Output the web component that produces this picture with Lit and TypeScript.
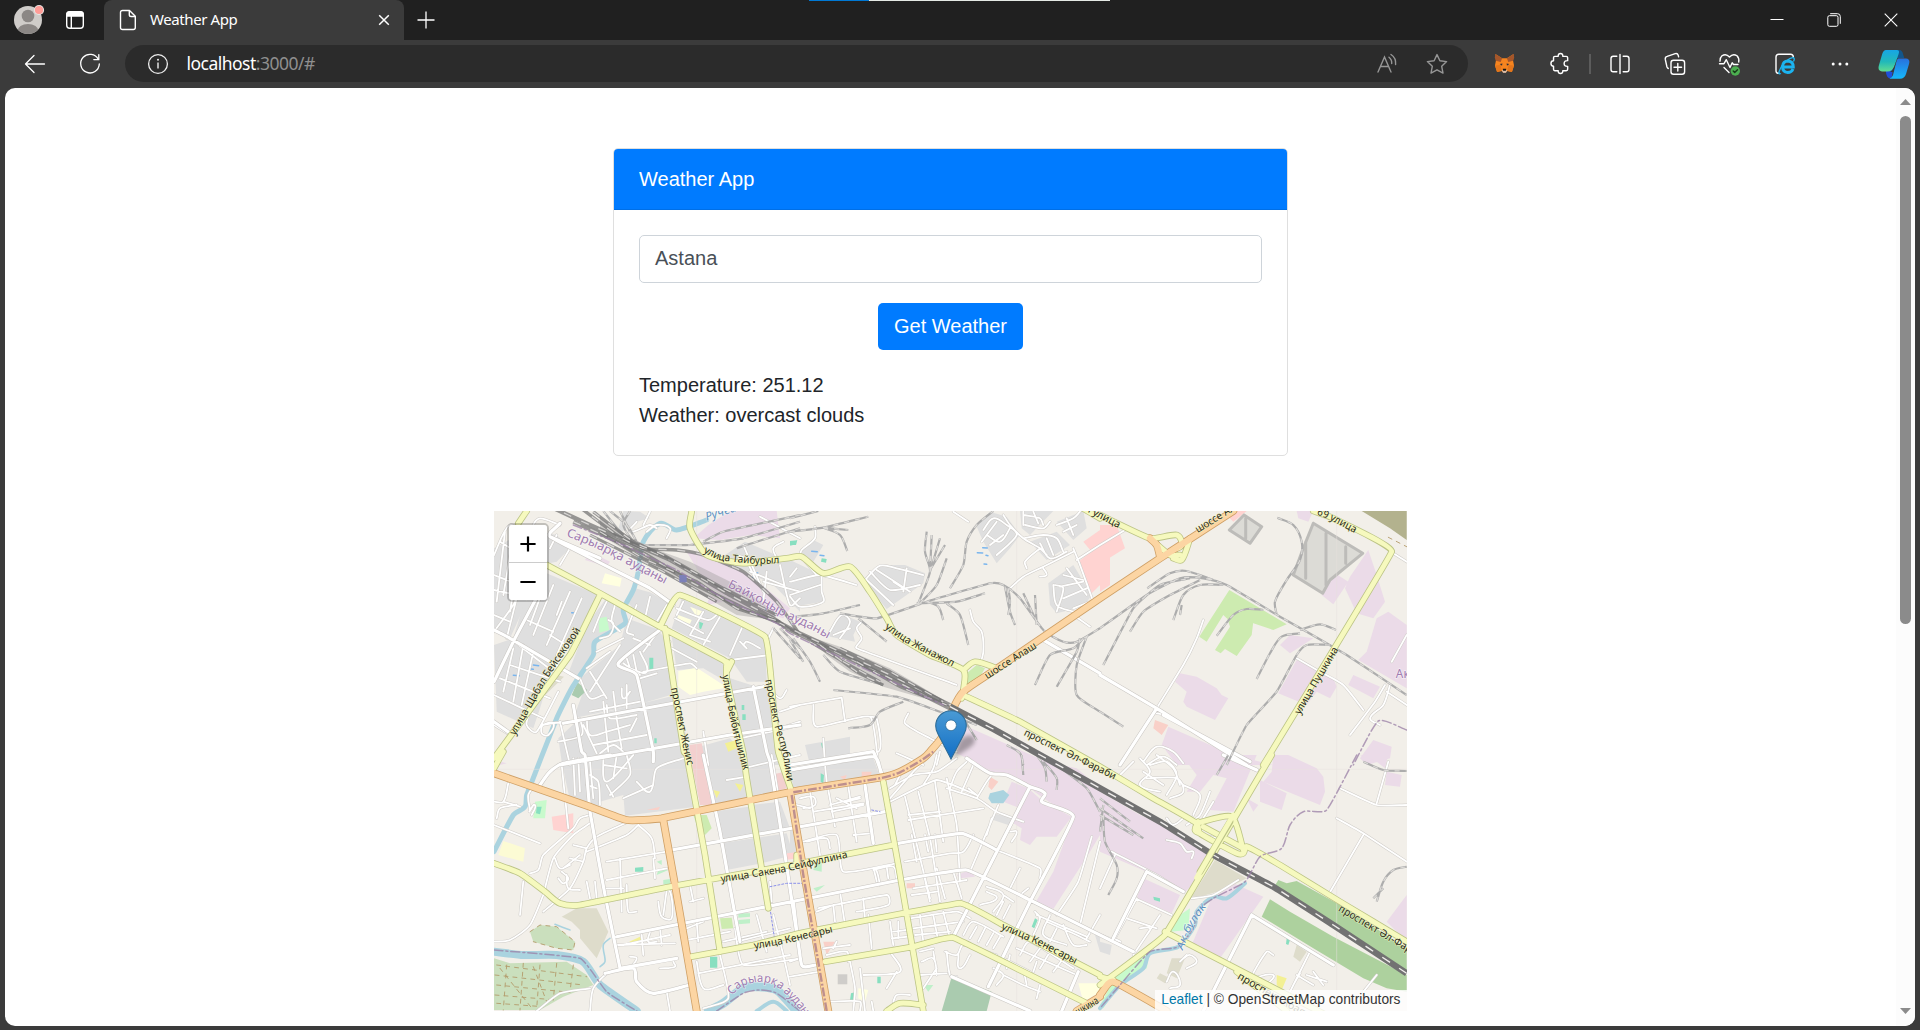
import { LitElement, html, css, svg } from "lit";
import { customElement } from "lit/decorators.js";

/* Map sheets: each letter is the origin of a sheet drawn at three units per pixel. */
const SHEETS: Record<string, [number, number]> = {
  A: [490, 505], B: [790, 505], C: [1100, 505],
  D: [490, 755], E: [790, 755], F: [1100, 755],
};

/* "A 10,20 30,40 B 0,5" -> list of map points. Sheets overlap at the right and
   bottom edges, so a point in the overlap is dropped when the next sheet begins. */
function points(src: string): [number, number][] {
  let o = SHEETS.A;
  let edge = false;
  const out: [number, number][] = [];
  for (const t of src.trim().split(/\s+/)) {
    if (SHEETS[t]) {
      if (edge && out.length > 1) out.pop();
      edge = false;
      o = SHEETS[t];
      continue;
    }
    const [x, y] = t.split(",").map(Number);
    edge = x >= 900 || y >= 750;
    out.push([+(o[0] + x / 3).toFixed(1), +(o[1] + y / 3).toFixed(1)]);
  }
  return out;
}
function line(src: string): string {
  return src.split("|").map((s) => "M" + points(s).map((p) => p.join(",")).join("L")).join("");
}
function curve(src: string): string {
  const unit = (a: number[], b: number[]) => {
    const l = Math.hypot(b[0] - a[0], b[1] - a[1]) || 1;
    return [(b[0] - a[0]) / l, (b[1] - a[1]) / l];
  };
  return src.split("|").map((s) => {
    const p = points(s);
    let d = `M${p[0]}`;
    for (let i = 0; i < p.length - 1; i++) {
      const a = p[i - 1] ?? p[i], b = p[i], c = p[i + 1], e = p[i + 2] ?? c;
      const k = Math.min(Math.hypot(c[0] - b[0], c[1] - b[1]) * 0.3, 6);
      const u = unit(a, c), v = unit(b, e);
      const n = (q: number) => q.toFixed(1);
      d += `C${n(b[0] + u[0] * k)},${n(b[1] + u[1] * k)} ${n(c[0] - v[0] * k)},${n(c[1] - v[1] * k)} ${c}`;
    }
    return d;
  }).join("");
}

const AREAS: [string, string][] = [
  /* residential */
  ["#dfdfdf", "A 12,130 75,95 110,290 60,400 12,370|A 90,70 200,90 240,130 200,170 150,180"],
  ["#dfdfdf", "A 100,300 170,205 325,270 270,370 190,480 150,610 130,670 20,620 12,420 70,400"],
  ["#dfdfdf", "A 345,285 400,305 405,350 325,405 310,450 260,520 235,505 290,360"],
  ["#dfdfdf", "A 435,250 480,262 548,300 515,355 430,310 410,290"],
  ["#dfdfdf", "A 410,340 500,372 525,400 560,565 440,600 250,640 280,560 270,520 390,420"],
  ["#dfdfdf", "A 575,280 825,400 830,530 770,530 720,460 545,370"],
  ["#dfdfdf", "A 545,395 700,470 700,525 640,490 560,495"],
  ["#dfdfdf", "A 720,520 800,545 835,540 870,700 880,780 750,780"],
  ["#dfdfdf", "A 205,700 270,640 560,570 600,740 D 618,155 405,182 400,120 330,140 325,155 238,128 215,20"],
  ["#dfdfdf", "A 610,730 720,700 760,745 D 770,60 778,130 665,150 640,0 600,0"],
  ["#dfdfdf", "D 765,30 840,20 855,110 778,125|D 682,168 775,155 790,235 690,258|D 785,150 870,140 900,220 795,235|D 690,265 890,235 910,300 815,325 710,345"],
  ["#dfdfdf", "A 690,160 765,110 930,180 930,320 850,240"],
  ["#dfdfdf", "A 380,90 440,50 480,40 450,20 400,18"],
  ["#dfdfdf", "B 30,140 70,105 100,120 70,170|B 0,165 95,210 100,290 10,305 0,290"],
  ["#dfdfdf", "B 220,225 270,180 345,180 405,205 400,235 290,312|B 115,380 150,325 210,350 190,390 195,410 120,395"],
  ["#dfdfdf", "B 560,65 600,20 650,35 690,90 660,130 620,175 580,110|B 690,18 790,18 720,90 695,70|B 720,110 800,80 840,120 770,165|B 800,50 880,18 890,70 850,105"],
  ["#dfdfdf", "B 775,235 850,180 905,270 880,305 800,325 780,300"],
  ["#dfdfdf", "E 0,45 250,10 270,65 10,100|B 45,720 180,695 180,765 60,780|E 0,220 15,220 20,300 0,305|E 610,175 670,190 655,210 610,195"],
  ["#dfdfdf", "F 0,560 35,570 30,600 0,590|E 915,540 930,540 930,590"],
  /* industrial */
  ["#ebdbe8", "A 655,60 720,18 860,18 870,100 780,90 690,105 610,100"],
  ["#ebdbe8", "A 590,140 640,150 780,210 900,310 880,340 740,300 650,240|A 300,140 360,170 350,185 285,165|A 660,270 700,290 650,300"],
  ["#ebdbe8", "B 520,660 690,735 E 770,20 860,40 930,100 930,240 900,290 790,462 738,440 790,350 850,185 760,130 720,100 640,55 600,55 530,10 B 500,745"],
  ["#ebdbe8", "E 665,80 715,100 760,140 845,185 800,245 740,245 720,270 690,255 695,220 670,205 690,160 640,140|E 500,360 540,345 555,365 510,370"],
  ["#ebdbe8", "F 0,110 120,180 260,240 330,305 300,370 250,415 140,350 0,290|F 130,370 240,420 215,475 110,430"],
  ["#ebdbe8", "F 400,385 490,425 360,610 275,570 330,440|F 245,0 470,0 400,170 330,165 380,70 340,60 300,110 260,110 290,60"],
  ["#ebdbe8", "C 185,720 205,665 400,750 520,780 230,780|C 225,530 240,505 290,515 350,550 365,570 385,580 345,645 260,605 250,590 260,560"],
  ["#ebdbe8", "C 590,465 700,520 710,545 690,580 650,560 620,600 535,565|C 540,420 570,390 640,400 570,445|C 760,510 840,545 820,580 745,540|C 800,440 830,340 865,320 920,360 920,550 775,465"],
  ["#ebdbe8", "C 665,270 705,205 745,230 700,298|C 750,215 805,135 830,210 855,290 820,340 770,325 735,250|C 590,18 640,18 625,50 595,40|C 820,705 875,725 870,760 800,780 780,760"],
  ["#ebdbe8", "F 520,0 565,0 650,40 670,65 675,110 660,150 490,80 515,50|F 480,75 560,115 545,165 480,140|F 440,130 475,150 460,170|F 780,0 865,0 855,40 830,20|F 860,50 905,60 900,95 855,90|F 920,420 920,560 860,500"],
  ["#ebdbe8", "A 12,765 50,775 30,780 12,780"],
  /* retail */
  ["#ffd3d1", "B 865,170 930,120 930,240 905,265|B 880,110 930,75 930,120 905,140|C 0,60 50,60 75,130 10,170 0,140|C 0,190 25,235 0,250|C 380,30 400,18 440,18 400,50|C 0,130 30,120 30,240 0,260"],
  ["#ffd3d1", "D 185,185 250,175 250,235 190,225|D 890,295 930,290 930,310 885,315"],
  ["#f3d0cf", "A 597,720 635,715 640,740 D 665,150 630,150 600,0|D 840,60 885,50 890,100 855,110"],
  ["#f9d0c8", "E 600,65 625,80 605,105 595,95|E 350,385 375,385 375,400 350,400|E 100,560 135,560 110,600|E 215,50 245,50 240,70 215,70|E 150,65 170,60 165,75|C 165,645 205,660 185,690 160,670|D 470,165 510,155 505,165"],
  /* education */
  ["#ffffe0", "A 565,498 620,488 700,540 700,550 640,560 600,570 565,545|A 345,205 395,220 390,245 335,235|A 565,330 605,345 600,357 560,343|A 600,305 640,320 620,335|E 865,685 930,685 930,710 880,740|E 205,700 235,705 225,740 205,730"],
  ["#fcfbd4", "D 40,258 105,280 100,320 25,300"],
  ["#f3f094", "D 670,105 690,110 680,130|D 735,85 760,90 750,110|D 418,560 450,545 455,560 430,570|F 530,660 560,670 545,705 530,690|A 705,715 740,705 740,730 715,740"],
  /* parks and woods */
  ["#cdebb0", "C 388,255 480,310 560,358 520,375 460,355 450,340 380,340 370,330 320,410 298,395"],
  ["#cdebb0", "C 390,365 460,350 455,390 410,453 375,432 362,445 345,435|C 380,335 470,330 470,350 390,365|B 530,505 560,480 585,490 570,515 530,540|D 610,180 650,180 665,220 645,240 620,210|D 690,490 725,488 730,520 695,522"],
  ["#add19e", "F 535,375 560,385 590,378 720,450 920,580 920,650 520,400|F 510,433 570,470 700,545 920,660 920,710 860,700 790,670 640,580 485,485"],
  ["#aacbaf", "E 485,665 605,710 590,768 455,768|A 262,532 292,555 265,580 245,570"],
  ["#cadfbd", "D 120,530 150,510 200,515 255,560 250,585 200,580 130,560|D 12,610 60,625 230,620 290,660 310,690 220,725 150,765 12,765"],
  ["#c8facc", "A 325,340 350,335 358,375 328,383|F 270,460 265,525 210,530 240,480|F 90,610 150,590 140,640 60,680 10,760 0,750 50,660|D 135,140 170,135 165,190 130,190"],
  ["#bff0c9", "D 500,320 515,315 515,330|D 505,345 535,345 500,360|D 520,375 540,372 540,388 520,388|D 745,475 780,475 780,485 745,488|D 745,495 780,492 780,505 745,508|E 70,400 105,390 80,410|E 75,325 95,325 95,350 70,345|E 400,690 430,690 415,710"],
  ["#dedccb", "A 200,510 222,515 145,590 165,560|D 215,485 260,460 320,460 355,530 320,610 270,550 270,525 245,500|F 345,315 440,370 370,405 300,425 275,425|F 215,610 255,610 230,670 200,655|F 590,570 620,590 600,620 580,605|F 180,655 210,670 195,685 170,670"],
  ["#b3b28e", "C 785,18 920,18 920,105 870,70"],
  ["#dcdbd6", "C 640,55 788,145 690,225 668,265 580,210 610,130|C 432,30 485,65 450,115 388,75"],
  ["#cfcdca", "E 143,658 172,658 172,688 143,688"],
  ["#aad3df", "E 600,115 640,105 658,120 640,145 605,145 595,130"],
  ["#88dfc0", "A 478,458 490,458 490,495 478,495|D 435,338 460,336 460,350 435,350|D 660,605 682,605 682,638 660,638|D 140,155 155,155 150,178 138,175|E 262,665 272,665 272,685 262,685|E 183,715 195,712 190,735 180,735|B 0,108 22,106 18,120 0,120|B 95,160 110,162 108,173 93,170|A 904,110 920,106 918,118 900,122|B 93,715 103,713 104,728 96,728|E 735,490 743,495 733,520 725,515|A 628,350 640,355 633,373 628,370|A 757,628 767,628 767,645 757,645|A 755,600 763,600 763,615 755,615|E 92,55 102,60 100,85 92,80|A 493,700 500,700 500,715 493,715|F 160,425 180,430 180,440 162,435|F 560,550 570,555 565,570 558,567"],
];

/* river, rail yards and streets; all drawn by class */
const WATER = [
  ["A 650,45 560,75 510,55 460,110 445,200 430,255 400,315 405,355 315,410 310,450 245,550 200,640 150,780 D 110,120 105,155 70,180 12,290", 5],
  ["D 12,590 100,600 200,600 280,620 330,690 440,768", 8],
  ["D 655,768 700,745 760,700 800,695 860,705 930,768 E 20,768", 9],
  ["D 800,768 850,740 890,768", 4],
  ["F 435,385 380,430 340,425 290,470 285,510 235,575 150,595 130,640 60,690 0,760", 4],
  ["D 330,635 345,620 340,570 360,550|D 195,508 240,525", 1.6],
] as [string, number][];

const MINOR = [
  /* A */
  "A 12,150 60,60 120,120 90,240 50,400|A 12,210 75,235|A 12,255 80,270|A 30,110 110,160|A 12,330 60,350|A 45,80 20,290|A 70,95 40,270|A 95,110 60,320|A 12,380 75,290 130,60 150,40 210,60",
  "A 155,265 120,360|A 190,240 130,390|A 240,260 170,420|A 275,280 200,450|A 110,345 190,380|A 180,390 245,430|A 215,290 200,330|A 70,430 40,560|A 100,420 70,590|A 130,440 95,600|A 60,480 210,530|A 30,520 180,580|A 12,570 160,640|A 60,400 190,500|A 120,620 110,660 140,680 205,560",
  "A 200,90 180,130|A 240,130 210,180|A 350,290 330,330 310,380|A 375,300 365,350 390,380|A 355,345 370,355 360,390 330,400|A 360,440 290,490|A 400,400 320,440|A 440,300 410,380 430,390|A 480,275 465,340|A 530,300 500,350",
  "A 270,520 300,580 340,570|A 300,500 350,580|A 390,420 300,560|A 480,420 430,400|A 500,385 460,440|A 400,475 450,510|A 410,460 420,490|A 430,450 440,500|A 450,440 470,500 420,490|A 460,500 600,475 620,490",
  "A 560,310 655,345 690,320|A 580,290 560,330|A 640,320 600,390|A 690,335 640,420|A 755,370 720,450|A 555,340 640,385|A 600,390 660,410|A 720,465 840,450|A 760,420 770,410 810,430|A 770,430 750,410|A 540,410 530,440|A 545,430 620,470|A 850,370 835,400",
  "A 205,710 275,690 270,640|A 210,650 240,780|A 290,640 300,690 350,680 420,660|A 340,590 355,740|A 370,560 380,640 395,730|A 395,550 400,580 420,560|A 410,540 410,610|A 300,620 450,590|A 350,600 360,640 440,630|A 280,660 320,745|A 420,680 440,640|A 310,720 470,690|A 330,745 370,720 400,740|A 155,660 190,655 175,690 155,685 160,660 240,650|A 450,520 500,505|A 720,560 830,545 870,580 890,555|A 750,700 890,670 930,660|A 640,680 655,780|A 870,620 930,600|A 840,680 930,650|A 12,660 60,690",
  "A 720,185 760,160 800,230|A 760,120 820,260|A 780,200 880,240|A 740,150 800,170|A 830,200 820,290|A 870,180 900,300 930,280|A 820,230 930,260|A 440,50 420,80 480,60 500,70|A 470,80 500,60 540,70 530,100|A 810,35 930,100|A 860,160 850,130 880,110|A 480,20 460,60",
  /* B */
  "B 75,65 75,100 35,135 30,150|B 0,230 90,210 200,240|B 95,200 95,260 100,290 30,305 0,275|B 0,270 90,240|B 20,190 0,215|B 45,170 80,210|B 225,225 270,182 320,190 400,210|B 240,200 300,255 390,240|B 260,195 360,260|B 230,225 310,300|B 310,230 340,250|B 350,190 340,260|B 120,380 155,330 180,350 150,400|B 215,350 200,370 215,400 200,430 500,540|B 540,315 550,350 575,380 580,440 570,480|B 490,20 535,50|B 130,390 180,370",
  "B 580,75 610,40 650,60 680,90 620,150|B 590,90 630,110 660,70|B 575,110 620,50|B 600,120 640,90|B 640,30 660,60 700,100 750,130 770,150|B 700,30 750,40 760,60|B 705,60 760,70 780,50|B 700,100 760,90 800,100 820,140|B 700,20 700,60|B 730,20 745,55|B 770,100 790,150|B 750,115 780,160 830,140|B 800,60 850,40 870,20|B 820,80 860,60|B 830,40 850,90|B 850,130 870,180 910,290|B 660,250 700,215 760,185 850,140|B 710,190 705,170 750,130|B 760,190 770,210 750,215",
  "B 795,240 820,250 800,320|B 820,210 880,225|B 830,190 890,270|B 810,245 880,230|B 820,280 890,250|B 850,310 900,290|B 790,240 800,300 850,320|B 850,330 900,365|B 930,120 860,165",
  "B 0,605 155,578|B 70,600 80,665 240,635 265,780|B 155,578 165,650|B 240,635 260,640 265,740 0,780|B 100,700 105,780|B 355,625 345,655 420,700 500,740|B 320,745 400,780|B 450,740 440,780",
  /* C */
  "C 0,120 75,75|C 310,345 290,400 250,480 170,610|C 590,460 660,500 730,540 790,615|C 855,540 825,590 750,690|C 870,540 850,600 810,640 840,660|C 860,560 920,600|C 880,145 920,170|C 920,390 875,470|C 170,625 200,630|C 130,770 170,725 220,740 250,775|C 140,780 190,755 230,780",
  /* D */
  "D 12,210 150,265|D 55,85 40,140 12,140|D 40,140 90,155|D 20,190 30,160 80,150|D 118,170 135,150 125,180|D 215,30 235,220|D 250,10 255,120|D 265,10 270,110|D 300,60 325,80 330,150|D 290,90 320,100|D 300,20 310,130|D 340,0 350,80 430,0|D 360,120 420,60 410,0|D 370,70 380,0|D 440,80 480,110 500,40 580,10|D 340,30 410,40|D 350,90 370,125|D 400,130 490,90|D 120,165 115,120 135,90",
  "D 120,355 145,345 160,300 250,220 270,190 300,180|D 160,420 190,310 250,240 300,205|D 405,205 320,245 290,280 280,320 240,400 160,470|D 445,210 410,240 290,290|D 445,210 485,250 495,310|D 290,280 250,270|D 280,320 240,310|D 270,300 220,340|D 195,310 210,340 240,330|D 215,350 235,370 220,385 205,370|D 230,360 235,400 270,405|D 290,380 300,430|D 315,380 320,430|D 100,380 90,480|D 390,310 395,470|D 350,375 480,350 530,340|D 350,320 530,290|D 350,400 400,400|D 410,390 415,470 440,470|D 490,310 495,370|D 505,400 540,410 545,490 515,485 505,440|D 530,405 520,480|D 600,390 610,440",
  "D 12,560 60,555 120,510 160,420|D 380,570 555,565|D 400,570 540,540|D 455,540 460,600|D 510,520 515,570|D 480,530 475,560 500,560|D 590,555 720,530|D 620,500 625,560|D 590,520 640,500|D 600,440 640,430|D 420,640 440,610 420,605|D 510,640 555,635 550,620|D 620,620 640,700 700,690|D 530,710 540,768|D 625,655 900,600|D 735,520 760,630 930,610|D 740,560 900,520|D 800,480 830,590|D 850,480 880,600 900,690|D 690,600 715,730 640,760|D 820,340 840,460|D 300,768 310,700 360,650 430,640|D 740,360 930,320|D 840,380 845,440|D 700,560 830,530|D 300,700 210,715 140,768",
  "D 640,0 670,140|D 760,40 930,0|D 845,0 865,120|D 710,75 770,65|D 880,30 900,110",
  /* E */
  "E 105,30 110,80|E 30,130 70,125 75,150 40,160|E 20,150 60,160|E 60,110 90,300|E 115,105 135,215|E 175,95 200,260|E 120,150 210,125|E 125,170 220,150|E 140,130 200,160|E 210,130 170,140|E 70,170 220,145|E 40,260 140,240 160,350 320,325|E 50,260 110,250 120,280|E 190,240 245,235|E 85,460 290,420 295,450 200,470|E 220,430 225,490|E 130,450 135,500|E 150,410 165,510|E 80,470 130,450|E 235,480 245,580|E 300,500 310,570|E 250,345 310,335 320,370|E 260,380 255,340 270,390|E 290,335 295,370|E 310,530 350,525|E 305,550 355,545|E 325,500 325,550",
  "E 300,140 440,75 560,120|E 345,125 420,430|E 385,110 420,250 450,440|E 435,80 460,260|E 470,70 500,210 510,380|E 355,195 580,160|E 355,180 450,170|E 365,240 380,320|E 405,240 415,290|E 435,240 440,290|E 345,320 480,295 520,290 550,240|E 400,350 420,440|E 440,340 465,430|E 490,350 515,430|E 370,400 530,375|E 365,420 440,410|E 500,380 510,410|E 360,490 500,470 540,490|E 370,520 520,500|E 375,540 480,530|E 390,480 400,560|E 430,480 445,560|E 460,470 480,550|E 390,590 430,580|E 395,620 430,610 440,660|E 430,590 435,620",
  "E 470,100 560,130 620,170 700,200|E 480,100 500,50 530,20|E 560,130 590,80 605,60|E 515,110 550,30|E 560,120 535,100|E 625,150 540,350|E 605,190 590,240|E 550,250 620,285 750,340 750,370|E 660,230 680,230 665,260|E 590,410 620,430 570,450|E 590,395 640,420 610,470|E 640,420 670,440|E 640,440 620,480|E 660,450 640,490|E 690,340 660,400|E 715,400 690,420|E 735,470 750,490 730,540",
  "E 465,590 500,600 520,570 620,600|E 505,600 510,640 540,600|E 520,540 550,500 640,545|E 540,550 560,515|E 565,560 585,520|E 590,570 610,535|E 610,580 630,545|E 470,590 480,660 500,665|E 610,640 640,660 620,690|E 620,650 600,690|E 640,610 720,650|E 660,600 650,640|E 640,660 700,690 750,710|E 700,640 710,690|E 740,620 730,650|E 680,580 860,660|E 690,600 720,560 850,640|E 720,620 750,580|E 750,640 780,590|E 790,650 820,610|E 750,690 740,730|E 770,500 860,540 900,560|E 780,480 760,540 830,570|E 800,520 780,560|E 820,510 850,570 890,570|E 905,245 865,380 800,480|E 930,260 870,510|E 740,480 890,545|E 890,550 930,480",
  "E 180,620 195,700 190,768|E 210,640 225,768|E 100,580 180,570|E 110,600 170,590 175,620|E 130,580 140,560|E 0,665 90,650|E 300,590 330,650 220,660|E 310,740 320,720 360,720|E 120,740 210,740 210,768|E 245,740 250,768|E 390,660 470,655|E 400,700 440,640|E 320,650 290,700|E 0,620 30,610|E 300,130 370,50 420,0|E 315,90 330,60|E 400,90 430,40 440,0|E 300,100 370,60 440,50 500,10",
  /* F */
  "F 100,20 60,60|F 120,10 150,50 120,90 180,110|F 150,30 200,20 230,60 200,120|F 170,0 220,40 240,90|F 140,70 230,70 250,110 210,130|F 130,50 190,90|F 250,90 300,120 280,180|F 330,110 300,180 260,210|F 200,190 220,210 260,180|F 340,140 310,190|F 200,255 240,265 260,290 280,290 275,310|F 350,250 310,240|F 275,430 340,420 415,375|F 0,540 60,560 40,550|F 45,300 0,400|F 100,600 180,480|F 35,290 170,360 250,410|F 45,550 110,430|F 105,430 215,480|F 120,520 150,520 140,540|F 250,610 270,600 290,620 260,640|F 240,620 260,600|F 200,680 220,650 240,690 210,700|F 520,600 500,590 450,680 490,690|F 460,670 520,660 500,690|F 590,660 640,690|F 620,660 680,680|F 640,650 670,690|F 630,590 560,730|F 790,240 685,420|F 710,190 790,235 920,320|F 830,660 790,710|F 720,100 830,150 920,150|F 865,20 830,145|F 170,520 80,490|F 600,655 580,690",
];

const STREETS = [
  "A 210,55 180,95 480,250 550,300",
  "A 180,95 330,160|A 12,375 60,400 265,520|A 155,250 75,400 12,530",
  "A 510,375 385,475 440,510 490,740 D 490,20",
  "A 250,600 275,740 D 285,0 300,170 345,420 390,640",
  "A 220,655 820,545|A 12,650 60,685|A 210,780 720,690 930,660|D 150,90 180,50 220,25 360,0|A 790,545 830,740 D 840,20 885,300 915,500 930,600",
  "D 545,285 930,220 E 30,215 285,170|D 640,0 690,230 735,480 750,560|D 380,545 730,475 930,435 E 30,435 330,375 530,345 720,435 930,535 F 100,590",
  "D 390,640 560,610|D 345,655 430,640 440,680 490,715 600,690",
  "E 0,45 250,5 275,60|B 250,740 0,780|B 250,740 E 255,0 275,55|E 225,90 250,265|E 325,265 515,235 620,285|E 530,10 600,55 650,60 720,95 765,115 755,140 850,185 720,440 595,695",
  "E 720,95 490,545|E 10,440 35,630 80,630|E 485,665 720,768|E 865,650 815,768|F 455,480 310,768|F 455,480 700,630|F 140,350 40,550|F 140,350 250,410",
  "C 0,510 170,610 440,780|C 170,610 60,780|C 190,630 450,770|B 760,405 930,505|F 370,0 470,45",
];

const YELLOW = [
  "A 110,18 85,55|A 170,180 330,265 420,315 510,365 700,465 715,480|A 330,270 240,450 12,760",
  "A 510,365 570,270 825,395 850,600 865,740 D 905,110|A 525,370 545,500 582,740 D 590,0 645,300 690,590|A 710,470 710,520 750,700 760,745 D 770,70 835,460|A 725,470 710,500",
  "A 605,18 600,70 650,150 760,175 B 0,158 35,155 100,205 180,185 240,260 290,340 320,390 420,450 520,495 520,560|B 520,495 555,470 620,490|B 515,580 530,550 600,505",
  "B 530,575 690,650 930,770 F 0,35 160,130 290,205 300,235 410,295 430,295 440,275 540,330 720,440 920,560|F 290,205 395,185 430,285|F 300,235 285,225 295,200|F 310,215 430,280",
  "C 0,30 150,100 230,90 245,120 220,135|C 220,160 245,165 270,100|C 150,100 210,150 240,150|C 640,18 700,40 875,140 490,780|F 515,0 195,540 0,690",
  "F 195,530 920,905|E 20,325 20,300",
  "D 12,325 90,355 165,410 210,445 270,450 540,395 930,325 E 30,325 310,270|E 280,80 325,330 400,768|D 595,607 790,570 930,545 E 30,535 130,515 510,445 640,510 930,660|E 105,620 370,575 490,548 900,750|E 290,768 330,745 400,750",
  "F 0,665 40,675|F 410,650 560,768|A 12,790 40,740|B 870,5 930,40",
];

const ORANGE = [
  "D 12,55 300,155 410,195 515,190 930,115 E 30,105 270,68 330,50 400,10 B 420,740 460,690 490,610 520,560 600,505 930,285 C 0,280 180,160 400,18",
  "D 520,195 555,390 620,768",
  "E 0,110 50,400 115,768",
  "C 180,155 170,120 150,100",
  "F 0,720 40,680 200,768|E 860,768 930,730 F 0,725",
];

const TUNNEL = ["D 905,120 925,300 E 40,360 110,768|E 10,112 270,70 330,52 400,12 B 430,740"];

const RAIL_MINOR = [
  "A 340,18 400,90 460,120|A 360,18 410,60 440,110|A 390,18 420,80|A 930,50 760,100 600,120 460,120|A 930,30 700,80 640,110|A 930,70 800,110 740,130|A 420,18 400,60 430,110",
  "B 0,80 100,68 235,35|B 0,40 85,18|B 100,68 150,90 172,138|B 100,68 175,75|B 20,335 100,325 210,300|B 150,325 260,340 410,290 600,235 640,240 690,280 760,375 820,410 860,410 930,370|B 205,340 290,410|B 385,295 420,200 405,140 410,80|B 420,200 425,90|B 420,200 450,100|B 420,195 465,120|B 390,295 440,240 470,160|B 480,250 520,180 530,110 560,60 610,18|B 380,295 500,290 585,265|B 410,290 445,305 460,345|B 470,295 510,330 535,420|B 645,245 660,320 675,360|B 655,250 660,290 655,330|B 740,360 735,270|B 740,350 700,265|B 870,400 860,440 800,545|B 880,400 850,430 780,450 735,540|B 890,395 860,480 860,570 930,620",
  "B 130,555 320,575 450,620 560,660|B 175,670 240,660 270,620 340,590|B 0,405 40,470|B 10,400 60,470 90,530|B 100,450 150,500 280,540|B 520,640 560,705|B 650,720 690,745 700,780",
  "A 850,370 930,460|A 870,370 930,430",
  "C 0,370 140,270 240,220 310,220 380,240 540,335 620,380 740,450 920,570|C 142,250 210,205 260,198 340,225|C 10,480 100,310 180,240 270,220|C 90,380 130,320 210,270 300,225|C 220,345 250,270 300,240 370,240|C 240,330 245,300|C 532,38 580,60 605,110 600,165 560,225 525,290 530,330|C 350,392 400,330 440,312 490,315|C 600,375 660,358 708,375|C 470,522 510,445 545,395 600,385|C 690,420 620,420 590,450 530,560 440,660 380,780|C 0,620 70,665",
  "F 350,60 385,0|F 10,180 15,260 50,330 50,370 25,420|F 0,160 130,250|F 0,180 100,240|F 830,440 850,380 880,345 920,335|F 820,430 850,400|F 790,20 850,45 920,48|F 0,130 90,200|F 10,150 0,230",
  "E 695,0 700,60|E 770,80 765,40 740,0|E 800,105 800,70 760,20|E 930,170 890,100 800,30",
];
const RAIL = [
  ["A 170,0 300,60 460,130 540,165 720,270 850,340 B 0,375 240,490 480,610", 4.2],
  ["A 260,0 380,90 460,130 560,135 640,150 760,200 860,290 930,390", 3.4],
  ["A 250,50 460,145 600,230 760,310 860,350 B 30,385 150,440 300,510 480,600", 4],
  ["A 330,80 460,160 620,230 740,310 870,350", 3],
  ["A 310,20 430,110 520,150 700,250 860,330", 3.2],
  ["A 300,90 520,200 680,290|B 90,420 200,500 280,540|B 60,410 160,470 270,530|B 150,430 300,500 460,590|B 200,470 330,545 470,600", 3],
  ["B 480,605 610,672 E 745,-3 930,92 F 180,200 340,300 520,395 700,510 920,655", 6.4],
] as [string, number][];
const ADMIN = ["A 250,60 400,120 560,195 700,280 860,355 B 0,385 200,480 460,600", "D 12,585 270,610 350,710 440,768", "D 680,768 760,715 810,705 860,715 930,768", "F 770,0 680,165 610,170 570,210 545,280 480,305 435,380 340,430 290,470 285,510 235,575 150,590 60,690 0,760", "C 920,675 835,648 760,780"];

interface MapLabel { text: string; path: string; len: number; kind?: string; size?: number }
const LABELS: MapLabel[] = [
  { text: "Сарыарқа ауданы", path: "A 228,92 330,135 525,238", len: 110, kind: "district", size: 12 },
  { text: "Байқоңыр ауданы", path: "A 712,245 800,290 890,340 B 60,372 115,402", len: 113, kind: "district", size: 12 },
  { text: "Сарыарқа ауданы", path: "D 725,720 755,695 800,682 840,685 880,710 E 30,765 55,800", len: 98, kind: "district", size: 12 },
  { text: "Ақ", path: "C 888,518 950,518", len: 14, kind: "district", size: 12 },
  { text: "Ручей", path: "A 650,47 760,12", len: 32, kind: "river", size: 11.5 },
  { text: "Ак-булак", path: "F 248,585 275,520 325,445", len: 50, kind: "river" },
  { text: "улица Тайбурыл", path: "A 640,142 690,165 790,176 875,175", len: 78 },
  { text: "улица Щабал Бейсековой", path: "A 75,692 180,510 275,372", len: 124 },
  { text: "проспект Женис", path: "A 543,550 562,640 582,740 D 595,40", len: 79 },
  { text: "улица Бейбитшилик", path: "A 697,512 720,640 745,745 D 764,60", len: 97 },
  { text: "проспект Республики", path: "A 826,525 850,650 D 878,0 893,90", len: 104 },
  { text: "улица Жанажол", path: "B 284,370 350,415 490,487", len: 78 },
  { text: "шоссе Алаш", path: "B 592,523 745,425", len: 59 },
  { text: "шоссе Алаш", path: "C 293,84 450,-12", len: 59 },
  { text: "69 улица", path: "C 650,28 690,45 765,85", len: 42 },
  { text: "проспект Әл-Фараби", path: "B 700,690 890,785 F 55,80", len: 101 },
  { text: "улица Пушкина", path: "C 600,630 718,430", len: 76 },
  { text: "улица Сакена Сейфуллина", path: "D 694,382 880,352 E 180,306", len: 129 },
  { text: "улица Кенесары", path: "D 794,582 890,565 E 134,530", len: 80 },
  { text: "улица Кенесары", path: "E 633,522 740,568 856,628", len: 82 },
  { text: "проспект Әл-Фараби", path: "F 714,467 930,595 1100,690", len: 101 },
  { text: "проспект Абая", path: "F 411,670 620,790", len: 76 },
  { text: "Пушкина", path: "E 840,795 925,745", len: 34 },
  { text: "ая улица", path: "B 868,8 990,72", len: 44 },
];

@customElement("city-map")
class CityMap extends LitElement {
  static styles = css`
    :host { display: block; width: 913px; height: 500px; position: relative; background: #f2efe9; overflow: hidden; }
    .canvas { display: block; width: 913px; height: 500px; }
    .canvas path { fill: none; stroke-linejoin: round; stroke-linecap: round; }
    .canvas .area { stroke: none; }
    .canvas .water { stroke: #aad3df; }
    .canvas .minor-case { stroke: #cfccc8; stroke-width: 2.8; }
    .canvas .minor { stroke: #fff; stroke-width: 1.8; }
    .canvas .street-case { stroke: #c8c5c1; stroke-width: 4.2; }
    .canvas .street { stroke: #fff; stroke-width: 3.2; }
    .canvas .yellow-case { stroke: #bcc486; stroke-width: 6.6; }
    .canvas .yellow { stroke: #f6f9be; stroke-width: 5; }
    .canvas .orange-case { stroke: #cfa066; stroke-width: 7.8; }
    .canvas .orange { stroke: #fcd5a3; stroke-width: 6.2; }
    .canvas .lane { stroke: #bd8f8e; stroke-width: 2.4; stroke-dasharray: 9 2 2 2; stroke-linecap: butt; }
    .canvas .rail-minor { stroke: #adadad; stroke-width: 2.2; stroke-linecap: butt; }
    .canvas .rail-minor-gap { stroke: #dddbd8; stroke-width: 1.2; stroke-dasharray: 5 6; stroke-linecap: butt; }
    .canvas .rail { stroke: #727272; stroke-linecap: butt; }
    .canvas .rail-gap { stroke: #d6d4d2; stroke-width: 1.3; stroke-dasharray: 8 11; stroke-linecap: butt; }
    .canvas .main-gap { stroke: #f0eeec; stroke-width: 1.4; stroke-dasharray: 9 11; stroke-linecap: butt; }
    .canvas .yard { fill: #a3a1a1; opacity: .45; }
    .canvas .station { fill: #7c80b8; }
    .canvas .admin { stroke: #9a7fa5; stroke-width: 1.5; stroke-dasharray: 9 3 2 3; opacity: 0.75; }
    .canvas .hatch { stroke: #bdbcb9; stroke-width: 3; }
    .canvas .wood { stroke: #b39b6b; stroke-width: 0.9; stroke-dasharray: 4 5; }
    .canvas .pool { stroke: #79b5ee; stroke-width: 1.4; }
    .canvas .walk { stroke: #8a90ea; stroke-width: 1; stroke-dasharray: 2 2; }
    .canvas .seam { stroke: #e6e3dd; stroke-width: 0.5; }
    .label { font-family: "Noto Sans", sans-serif; font-size: 10.3px; font-weight: 400; fill: #2a2a20; paint-order: stroke; stroke: #f6f9be; stroke-opacity: .6; stroke-width: 1.4px; stroke-linejoin: round; }
    .label.district { fill: #a07bb0; stroke: #fff; stroke-opacity: .5; }
    .label.river { fill: #5f93c2; font-style: italic; stroke: #fff; stroke-opacity: .5; }
    .zoom { position: absolute; left: 13px; top: 12px; width: 38px; display: flex; flex-direction: column; border: 2px solid rgba(0,0,0,.2); border-radius: 5px; background-clip: padding-box; }
    .step { height: 37px; box-sizing: border-box; background: #fff; display: grid; place-items: center; border-radius: 0 0 3px 3px; }
    .step:first-child { border-bottom: 1px solid #ccc; border-radius: 3px 3px 0 0; height: 38px; }
    .step svg { width: 16px; height: 16px; display: block; }
    .pin { position: absolute; left: 441px; top: 198px; width: 52px; height: 52px; }
    .credit { position: absolute; right: 0; bottom: 0; height: 21px; box-sizing: border-box; padding: 0 6.5px; white-space: nowrap; background: rgba(255,255,255,.8); font: 13.75px/19px "Liberation Sans", Arial, sans-serif; color: #333; }
    .credit a { color: #0078a8; text-decoration: none; }
  `;
  render() {
    const all = (list: string[]) => list.map(curve).join("");
    const minor = all(MINOR), streets = all(STREETS), yellow = all(YELLOW), orange = all(ORANGE), rm = all(RAIL_MINOR);
    const main = curve(RAIL[RAIL.length - 1][0]);
    return html`
      <svg class="canvas" viewBox="494 511 913 500">
        ${AREAS.map(([c, d]) => svg`<path class="area" style="fill:${c}" d="${line(d)}"/>`)}
        <path class="hatch" d="${line("C 640,55 788,145 690,225 668,265 580,210 610,130 640,55|C 617,110 617,220|C 678,85 678,240|C 737,125 737,175|C 432,30 485,65 450,115 388,75 432,30|C 437,40 437,100")}"/>
        <path class="wood" d="${line("D 120,530 150,510 200,515 255,560 250,585 200,580 130,560|D 20,630 290,665|D 15,660 280,690|D 20,690 240,712|D 15,720 200,735|D 20,745 160,755|D 50,630 40,765|D 100,625 90,765|D 150,630 140,760|D 200,625 190,735|D 250,630 240,710|C 865,97 920,125|D 30,640 130,765|D 130,635 170,740")}"/>
        ${WATER.map(([d, w]) => svg`<path class="water" style="stroke-width:${w}px" d="${curve(d)}"/>`)}
        <path class="pool" d="${line("A 780,202 803,204|A 788,217 803,218|A 245,323 255,324|A 130,480 146,482|A 70,511 88,512|A 122,492 130,493|B 65,139 82,140|B 90,151 102,152|B 578,128 592,129|B 562,143 578,144|B 588,151 594,152|B 582,177 590,178")}"/>
        <path class="seam" d="${line("A 620,18 620,740 D 620,768|B 680,18 680,740 E 680,768|C 710,18 710,740 F 710,768|D 12,43 890,43 F 920,43")}"/>
        <path class="minor-case" d="${minor}"/><path class="minor" d="${minor}"/>
        <path class="street-case" d="${streets}"/><path class="street" d="${streets}"/>
        <path class="walk" d="${line("D 840,395 890,385 E 35,385|D 840,460 855,560|E 245,165 270,170")}"/>
        <path class="rail-minor" d="${rm}"/><path class="rail-minor-gap" d="${rm}"/>
        <path class="yard" d="${line("A 330,40 460,120 600,170 740,240 860,325 850,345 740,330 600,250 440,155 330,90|B 60,395 150,425 300,490 470,590 400,580 280,545 180,500 110,450")}"/>
        ${RAIL.slice(0, -1).map(([d, w]) => svg`<path class="rail" style="stroke-width:${w}px;opacity:.72" d="${curve(d)}"/><path class="rail-gap" d="${curve(d)}"/>`)}
        <path class="station" d="${line("A 568,210 590,210 590,232 568,232")}"/>
        <path class="yellow-case" d="${yellow}"/><path class="orange-case" d="${orange}"/>
        <path class="yellow" d="${yellow}"/><path class="orange" d="${orange}"/>
        <path class="lane" d="${all(TUNNEL)}"/>
        <path class="rail" style="stroke-width:6.4px" d="${main}"/>
        <path class="main-gap" d="${main}"/>
        <path class="yellow-case" d="${line("F 390,200 300,350")}"/><path class="yellow" d="${line("F 400,180 290,368")}"/>
        <path class="admin" d="${all(ADMIN)}"/>
        ${LABELS.map((l, i) => svg`
          <path id="lab${i}" d="${curve(l.path)}"/>
          <text class="label ${l.kind ?? ""}" style="font-size:${l.size ?? 10.3}px"><textPath href="#lab${i}" textLength="${l.len}" lengthAdjust="spacingAndGlyphs">${l.text}</textPath></text>`)}
      </svg>
      <svg class="pin" viewBox="0 0 52 52">
        <defs>
          <linearGradient id="pinfill" x1="0" y1="0" x2="0" y2="1"><stop offset="0" stop-color="#4a9ad4"/><stop offset="1" stop-color="#126fc6"/></linearGradient>
          <filter id="soft" x="-30%" y="-30%" width="160%" height="160%"><feGaussianBlur stdDeviation="2"/></filter>
        </defs>
        <path d="M17 50 L25 31 Q33 24 39 28 Q42 34 34 39 Z" fill="#000" opacity=".3" filter="url(#soft)"/>
        <path d="M16 50 L3 25 Q.7 20.5 .7 17 A15.3 15.3 0 0 1 31.3 17 Q31.3 20.5 29 25 Z" fill="url(#pinfill)" stroke="#2e6c97" stroke-width="1.1"/>
        <circle cx="16" cy="16.3" r="5.4" fill="#fff" stroke="#2e6c97" stroke-width=".8"/>
      </svg>
      <div class="zoom">
        <div class="step"><svg viewBox="0 0 16 16"><path d="M.4 8H15.6M8 .4V15.6" stroke="#000" stroke-width="2.2" fill="none"/></svg></div>
        <div class="step"><svg viewBox="0 0 16 16"><path d="M.4 8H15.6" stroke="#000" stroke-width="2" fill="none"/></svg></div>
      </div>
      <div class="credit"><a>Leaflet</a> | © OpenStreetMap contributors</div>
    `;
  }
}

const S = 'round';
const icons = {
  avatar: svg`<svg width="32" height="32" viewBox="0 0 32 32"><defs><clipPath id="av"><circle cx="15" cy="16" r="14"/></clipPath></defs><circle cx="15" cy="16" r="14" fill="#cfccc9"/><g clip-path="url(#av)" fill="#8b8785"><circle cx="15" cy="12" r="6.3"/><ellipse cx="15" cy="27" rx="10.5" ry="7"/></g><circle cx="26" cy="6" r="5.1" fill="#e8e6e4"/><circle cx="26" cy="6" r="4.1" fill="#ff9c97"/></svg>`,
  workspace: svg`<svg width="20" height="20" viewBox="0 0 20 20" fill="none" stroke="#fff" stroke-width="1.4"><rect x="1.7" y="1.7" width="16.6" height="16.6" rx="3"/><path d="M2 3.5Q2.5 2 4 2H16Q18 2 18 4V6H2Z" fill="#fff"/><path d="M6.3 6V18"/></svg>`,
  page: svg`<svg width="18" height="22" viewBox="0 0 18 22" fill="none" stroke="#fff" stroke-width="1.4" stroke-linejoin="${S}"><path d="M3.5 1.5H10.5L16.3 7.3V18.5Q16.3 20.5 14.3 20.5H3.5Q1.5 20.5 1.5 18.5V3.5Q1.5 1.5 3.5 1.5Z"/><path d="M10.3 1.7V5.7Q10.3 7.5 12.1 7.5H16"/></svg>`,
  close: svg`<svg width="12" height="12" viewBox="0 0 12 12"><path d="M1.2 1.2L10.8 10.8M10.8 1.2L1.2 10.8" stroke="#fff" stroke-width="1.5"/></svg>`,
  plus: svg`<svg width="18" height="18" viewBox="0 0 18 18"><path d="M.5 9H17.5M9 .5V17.5" stroke="#fff" stroke-width="1.3"/></svg>`,
  min: svg`<svg width="14" height="14" viewBox="0 0 14 14"><path d="M.5 6.5H13.5" stroke="#fff"/></svg>`,
  restore: svg`<svg width="14" height="14" viewBox="0 0 14 14" fill="none" stroke="#fff"><rect x=".8" y="2.7" width="10.2" height="10.6" rx="1.6"/><path d="M3.2 .7H10.5Q13.3 .7 13.3 3.5V10.8"/></svg>`,
  shut: svg`<svg width="14" height="14" viewBox="0 0 14 14"><path d="M.7 .7L13.3 13.3M13.3 .7L.7 13.3" stroke="#fff" stroke-width="1.1"/></svg>`,
  back: svg`<svg width="22" height="22" viewBox="0 0 22 22" fill="none" stroke="#fff" stroke-width="1.3" stroke-linecap="${S}" stroke-linejoin="${S}"><path d="M20.5 11H1.5M10 2.5L1.5 11L10 19.5"/></svg>`,
  reload: svg`<svg width="22" height="22" viewBox="0 0 22 22" fill="none" stroke="#fff" stroke-width="1.3" stroke-linecap="${S}"><path d="M19.3 6.4A9.3 9.3 0 1 0 20.3 11"/><path d="M19.8 1.6V6.6H14.8"/></svg>`,
  info: svg`<svg width="22" height="22" viewBox="0 0 22 22"><circle cx="11" cy="11" r="9.4" fill="none" stroke="#eee" stroke-width="1.3"/><path d="M11 9.6V15.6" stroke="#eee" stroke-width="1.4"/><circle cx="11" cy="6.8" r="1" fill="#eee"/></svg>`,
  aloud: svg`<svg width="22" height="22" viewBox="0 0 22 22" fill="none" stroke="#969696" stroke-width="1.4" stroke-linecap="${S}"><path d="M2 19L8.5 4L15 19M4.5 13.5H12.6"/><path d="M13 4.2Q16 6.5 15.7 10.5"/><path d="M15 1.5Q20.3 5 19.6 11.5"/></svg>`,
  star: svg`<svg width="22" height="22" viewBox="0 0 22 22" fill="none" stroke="#969696" stroke-width="1.4" stroke-linejoin="${S}"><path d="M11 1.6L13.9 7.8L20.6 8.6L15.7 13.3L17 20.1L11 16.8L5 20.1L6.3 13.3L1.4 8.6L8.1 7.8Z"/></svg>`,
  fox: svg`<svg width="21" height="21" viewBox="0 0 22 22"><path d="M1.5 1L8.5 5.5H13.5L20.5 1L20 8L21 13L18.8 20L14 18.8L12.5 20.5H9.5L8 18.8L3.2 20L1 13L2 8Z" fill="#f5841f"/><path d="M1.5 1L8.5 5.5L7 9.5L2 8L.8 4.8ZM20.5 1L13.5 5.5L15 9.5L20 8L21.2 4.8Z" fill="#a5562a"/><path d="M1 13L7 12.5L8 18.8L3.2 20ZM21 13L15 12.5L14 18.8L18.8 20Z" fill="#e4761b"/><path d="M6 11.5L8.8 11L8.4 13.3ZM16 11.5L13.2 11L13.6 13.3Z" fill="#2b2d38"/><path d="M8 17.5L9.5 20.8H12.5L14 17.5L12.7 18H9.3Z" fill="#d7c1b3"/><path d="M9.2 16.5H12.8L12.4 18.5H9.6Z" fill="#161616"/></svg>`,
  puzzle: svg`<svg width="21" height="23" viewBox="0 0 22 24" fill="none" stroke="#fff" stroke-width="1.5" stroke-linejoin="${S}"><path d="M5 4.5H8.6Q8.3 1.5 11 1.5Q13.7 1.5 13.4 4.5H17Q18.5 4.5 18.5 6V9Q14.8 8.8 14.8 12Q14.8 15.2 18.5 15V18Q18.5 19.5 17 19.5H13.4Q13.7 22.5 11 22.5Q8.3 22.5 8.6 19.5H5Q3.7 19.5 3.7 18V14.8Q1 14.8 1 12Q1 9.2 3.7 9.2V6Q3.7 4.5 5 4.5Z"/></svg>`,
  split: svg`<svg width="22" height="24" viewBox="0 0 22 24" fill="none" stroke="#fff" stroke-width="1.4" stroke-linecap="${S}"><path d="M11 2.5V21.5M7.8 4.3H4.2Q2 4.3 2 6.5V17.5Q2 19.7 4.2 19.7H7.8M14.2 4.3H17.8Q20 4.3 20 6.5V17.5Q20 19.7 17.8 19.7H14.2"/></svg>`,
  collect: svg`<svg width="22" height="24" viewBox="0 0 22 24" fill="none" stroke="#fff" stroke-width="1.4" stroke-linecap="${S}"><rect x="7" y="8.3" width="13.6" height="14" rx="2.5"/><path d="M13.8 11.5V19M10 15.3H17.6"/><path d="M4.3 16.5Q3.3 16 2.9 14.7L1.3 7.4Q.9 5 3.2 4.4L11.2 1.6Q13.5 1 14.2 3.2L14.6 4.8"/></svg>`,
  heart: svg`<svg width="24" height="24" viewBox="0 0 24 24" fill="none" stroke="#fff" stroke-width="1.4" stroke-linecap="${S}" stroke-linejoin="${S}"><path d="M2 9.2Q1.6 6 4 3.8Q8 1 11.5 5Q15 1 19 3.8Q21.5 6.5 20.7 10M6 15.5L11 20.5M1.5 11.7H6L8.3 7.7L12 15.5L14.2 10.8L15.5 12.5H20"/><circle cx="17.3" cy="19" r="4.7" fill="#4caf50" stroke="none"/><path d="M15.2 19.1L16.7 20.6L19.5 17.7" stroke="#183b1a"/></svg>`,
  ie: svg`<svg width="24" height="24" viewBox="0 0 24 24" fill="none"><path d="M6 21.2H5Q3 21.2 3 18.5V5Q3 2.2 5.8 2.2H17.5Q20.3 2.2 20.3 5" stroke="#fff" stroke-width="1.4" stroke-linecap="round"/><path d="M20 17Q18.6 20.5 14.8 20.5Q9.5 20 9.5 14.5Q10 9 15 9Q20.3 9.4 20.3 15H10.5" stroke="#1cb4f0" stroke-width="2.9"/><path d="M8 21.5Q3.5 23.5 8.5 14.5Q14 7 19.5 5.7Q22.5 5.5 20.5 9.5" stroke="#1cb4f0" stroke-width="1.3"/></svg>`,
  dots: svg`<svg width="20" height="8" viewBox="0 0 20 8" fill="#fff"><circle cx="3.2" cy="4" r="1.5"/><circle cx="10" cy="4" r="1.5"/><circle cx="16.8" cy="4" r="1.5"/></svg>`,
  copilot: svg`<svg width="32" height="30" viewBox="0 0 32 30"><defs><linearGradient id="ca" x1="0" y1="0" x2="0" y2="1"><stop offset="0" stop-color="#17a5e6"/><stop offset=".55" stop-color="#22b9b9"/><stop offset="1" stop-color="#62dc90"/></linearGradient><linearGradient id="cb" x1="0" y1="0" x2="0" y2="1"><stop offset="0" stop-color="#2870dd"/><stop offset="1" stop-color="#16b9fa"/></linearGradient></defs><path d="M18 1H21.5Q24.3 1.3 25 5L26.3 9H18Z" fill="#12568c"/><path d="M8 20H15L14 27Q14 30 11.5 29.3Q9 28.8 8 24Z" fill="#1f4fd8"/><path d="M8 1H19Q22 1 20.6 5L16.5 17Q14.5 22.5 9 22.5H4Q-.8 22 1 16L4.2 5Q5.5 1 8 1Z" fill="url(#ca)"/><path d="M20.5 9.5H28Q32.5 10 31 15L28 25Q26.5 29.8 22 29.8H11.5Q14 29 15 26L18 14Q19 9.5 20.5 9.5Z" fill="url(#cb)"/><path d="M19.3 9.2L15 23H12.2Q14.6 21.6 16 18.2Z" fill="#3b3b3b"/></svg>`,
};

@customElement("app-root")
class AppRoot extends LitElement {
  static styles = css`
    :host { display: flex; flex-direction: column; width: 1920px; height: 1030px; overflow: hidden; background: #3b3b3b; font-family: "Liberation Sans", Arial, sans-serif; position: relative; }
    svg { display: block; flex: none; }
    .tabs { height: 40px; background: #202020; display: flex; align-items: center; flex: none; }
    .avatar { margin-left: 13px; width: 32px; }
    .ws { margin-left: 20px; margin-right: 19px; }
    .tab { width: 300px; height: 40px; box-sizing: border-box; background: #3b3b3b; border-radius: 8px 8px 0 0; padding: 0 14px 0 15px; display: flex; align-items: center; color: #fff; font: 15px "Noto Sans", sans-serif; }
    .tab .name { flex: 1; margin-left: 13px; letter-spacing: -0.4px; padding-bottom: 3px; }
    .new { margin-left: 13px; flex: 1; }
    .win { display: flex; gap: 43px; margin-right: 22px; padding-bottom: 1px; }
    .progress { position: absolute; left: 809px; top: 0; width: 301px; height: 1px; display: flex; background: #e4e9e4; }
    .progress i { width: 60px; background: #0078d4; }
    .bar { height: 48px; flex: none; display: flex; align-items: center; box-sizing: border-box; padding-bottom: 1px; }
    .back { margin-left: 24px; }
    .reload { margin-left: 33px; }
    .url { margin-left: 24px; width: 1343px; height: 37px; border-radius: 19px; background: #2b2b2b; display: flex; align-items: center; box-sizing: border-box; padding: 0 20px 0 22px; font: 17.5px "Noto Sans", sans-serif; color: #fff; }
    .addr { flex: 1; margin-left: 17.5px; letter-spacing: -0.52px; padding-bottom: 1px; }
    .addr span { color: #8f8f8f; }
    .star { margin-left: 28px; }
    .tools { display: flex; align-items: center; margin-left: 8px; }
    .cell { width: 55px; display: grid; place-items: center; }
    .cell:first-child { width: 56.5px; }
    .cell:last-child { width: 52px; }
    .rule { width: 2px; height: 20px; background: #5c5c5c; margin: 0 1.5px; }
    .view { flex: none; margin: 0 5px; height: 938px; background: #fff; border-radius: 10px; overflow: hidden; display: flex; }
    .content { flex: 1; display: flex; flex-direction: column; align-items: center; }
    .scroll { width: 19px; background: #fcfcfc; display: flex; flex-direction: column; align-items: center; padding: 11px 0 12px; box-sizing: border-box; }
    .thumb { width: 11px; height: 508px; border-radius: 6px; background: #8b8b8b; margin-top: 11px; }
    .grow { flex: 1; }
    .card { margin-top: 60px; width: 675px; height: 308px; box-sizing: border-box; border: 1px solid #dfdfdf; border-radius: 5px; overflow: hidden; font-size: 20px; line-height: 30px; color: #212529; }
    .head { background: #007bff; color: #fff; padding: 15px 25px; height: 61px; box-sizing: border-box; border-bottom: 1px solid #006fe6; line-height: 31px; }
    .body { padding: 25px; display: flex; flex-direction: column; }
    .field { height: 48px; box-sizing: border-box; border: 1px solid #ced4da; border-radius: 5px; padding: 0 15px; line-height: 45px; color: #495057; }
    .go { align-self: center; margin-top: 20px; width: 145px; height: 47px; border-radius: 5px; background: #007bff; color: #fff; text-align: center; line-height: 46px; }
    .out { margin-top: 20px; }
    city-map { margin-top: 55px; }
  `;
  render() {
    return html`
      <div class="tabs">
        <div class="avatar">${icons.avatar}</div><div class="ws">${icons.workspace}</div>
        <div class="tab">${icons.page}<span class="name">Weather App</span>${icons.close}</div>
        <div class="new">${icons.plus}</div>
        <div class="win">${icons.min}${icons.restore}${icons.shut}</div>
      </div>
      <div class="progress"><i></i></div>
      <div class="bar">
        <div class="back">${icons.back}</div><div class="reload">${icons.reload}</div>
        <div class="url">${icons.info}<span class="addr">localhost<span>:3000/#</span></span>${icons.aloud}<div class="star">${icons.star}</div></div>
        <div class="tools">
          <div class="cell">${icons.fox}</div><div class="cell">${icons.puzzle}</div><div class="rule"></div>
          <div class="cell">${icons.split}</div><div class="cell">${icons.collect}</div><div class="cell">${icons.heart}</div>
          <div class="cell">${icons.ie}</div><div class="cell">${icons.dots}</div><div class="cell">${icons.copilot}</div>
        </div>
      </div>
      <div class="view">
        <div class="content">
          <div class="card">
            <div class="head">Weather App</div>
            <div class="body">
              <div class="field">Astana</div>
              <div class="go">Get Weather</div>
              <div class="out"><div>Temperature: 251.12</div><div>Weather: overcast clouds</div></div>
            </div>
          </div>
          <city-map></city-map>
        </div>
        <div class="scroll">
          <svg width="11" height="6" viewBox="0 0 11 6"><path d="M5.5 0L11 6H0Z" fill="#8b8b8b"/></svg>
          <div class="thumb"></div><div class="grow"></div>
          <svg width="11" height="6" viewBox="0 0 11 6"><path d="M5.5 6L11 0H0Z" fill="#8b8b8b"/></svg>
        </div>
      </div>
    `;
  }
}
